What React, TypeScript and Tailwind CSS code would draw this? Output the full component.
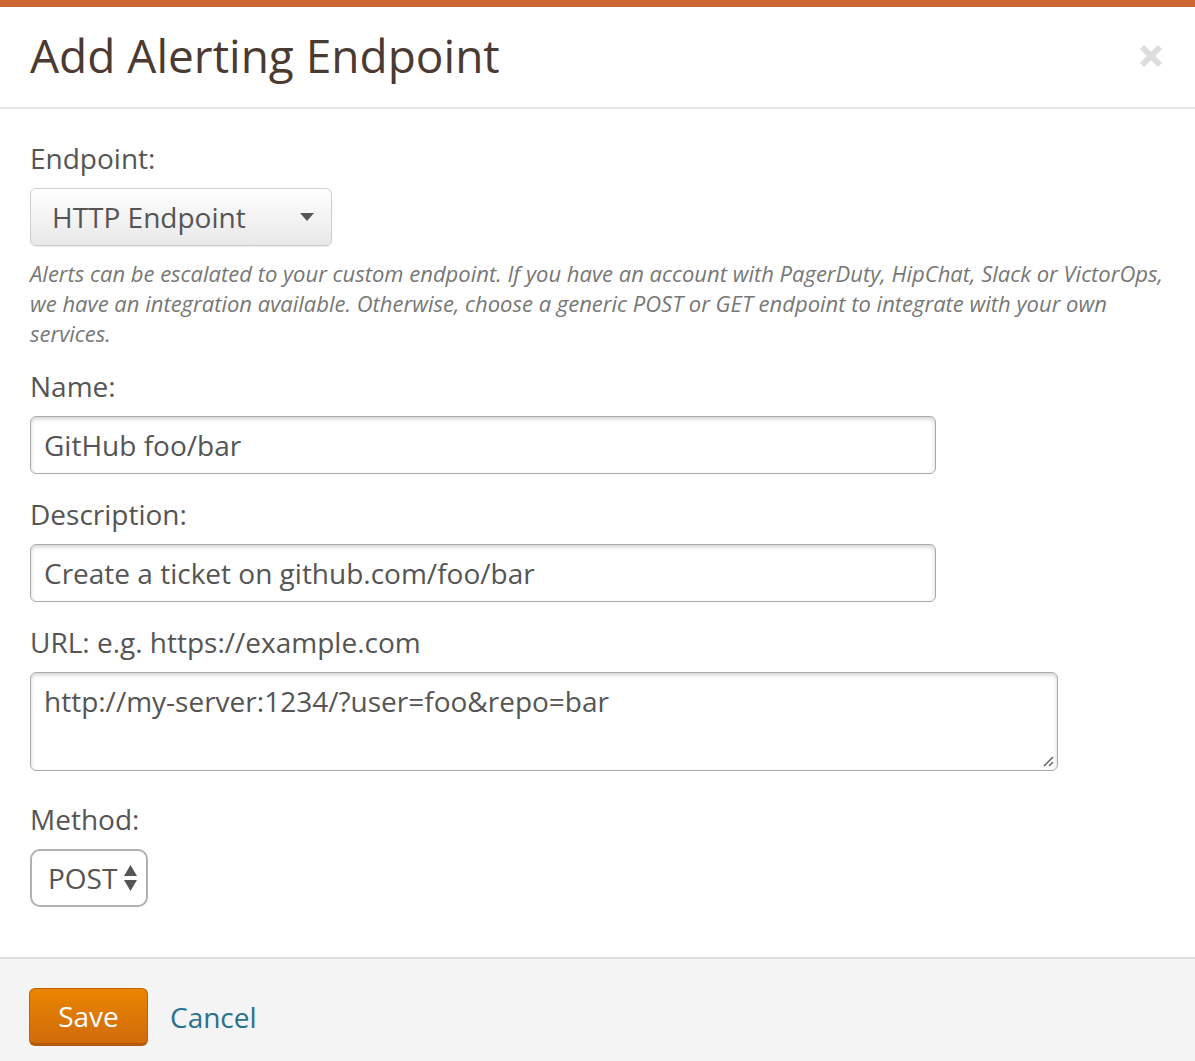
import React from 'react';

const font = { fontFamily: '"Open Sans", "Liberation Sans", sans-serif' };

function Label({ children }: { children: React.ReactNode }) {
  return <div className="text-[28px] leading-[40px] text-[#555] mb-[10px]">{children}</div>;
}

export default function App() {
  return (
    <div className="w-[1195px] h-[1061px] bg-white flex flex-col overflow-hidden" style={font}>
      {/* top accent */}
      <div className="h-[7px] bg-[#cc6633] shrink-0" />

      {/* Header */}
      <header className="flex justify-between items-start pl-[30px] pr-[32px] pt-[23px] h-[102px] border-b-2 border-[#e8e8e8] shrink-0">
        <h1 className="text-[46px] leading-[51px] text-[#4b3a32] font-normal">Add Alerting Endpoint</h1>
        <svg width="24" height="24" viewBox="0 0 24 24" className="mt-[14px]">
          <path d="M3 3 L21 21 M21 3 L3 21" stroke="#dddddd" strokeWidth="6" strokeLinecap="butt" />
        </svg>
      </header>

      {/* Body */}
      <main className="flex-1 pl-[30px] pt-[29px]">
        <Label>Endpoint:</Label>
        <div className="w-[302px] h-[58px] flex items-center justify-between pl-[21px] pr-[17px] rounded-[6px] border border-[#cfcfcf] bg-gradient-to-b from-[#ffffff] to-[#e8e8e8] shadow-[0_1px_1px_rgba(0,0,0,0.08)]">
          <span className="text-[28px] leading-[40px] text-[#555]">HTTP Endpoint</span>
          <svg width="14" height="8" viewBox="0 0 14 8">
            <path d="M0 0 H14 L7 8 Z" fill="#555" />
          </svg>
        </div>
        <p className="mt-[12px] w-[1142px] text-[22px] leading-[30px] italic text-[#777]">
          Alerts can be escalated to your custom endpoint. If you have an account with PagerDuty, HipChat, Slack or VictorOps, we have an integration available. Otherwise, choose a generic POST or GET endpoint to integrate with your own services.
        </p>

        <div className="mt-[18px]">
          <Label>Name:</Label>
          <div className="w-[906px] h-[58px] flex items-center px-[13px] rounded-[6px] border border-[#aaa] shadow-[inset_0_2px_4px_rgba(0,0,0,0.18)] text-[28px] leading-[40px] text-[#555]">
            GitHub foo/bar
          </div>
        </div>

        <div className="mt-[20px]">
          <Label>Description:</Label>
          <div className="w-[906px] h-[58px] flex items-center px-[13px] rounded-[6px] border border-[#aaa] shadow-[inset_0_2px_4px_rgba(0,0,0,0.18)] text-[28px] leading-[40px] text-[#555]">
            Create a ticket on github.com/foo/bar
          </div>
        </div>

        <div className="mt-[20px]">
          <Label>URL: e.g. https://example.com</Label>
          <div className="relative w-[1028px] h-[99px] px-[13px] pt-[8px] rounded-[6px] border border-[#aaa] shadow-[inset_0_2px_4px_rgba(0,0,0,0.18)] text-[28px] leading-[40px] text-[#555]">
            http://my-server:1234/?user=foo&amp;repo=bar
            <svg width="12" height="12" viewBox="0 0 12 12" className="absolute right-[3px] bottom-[3px]">
              <path d="M11 2 L2 11 M11 7 L7 11" stroke="#666" strokeWidth="1.5" />
            </svg>
          </div>
        </div>

        <div className="mt-[28px]">
          <Label>Method:</Label>
          <div className="w-[118px] h-[58px] flex items-center justify-between pl-[16px] pr-[9px] rounded-[10px] border-2 border-[#b0b0b0] bg-white">
            <span className="text-[28px] leading-[40px] text-[#555]">POST</span>
            <svg width="13" height="26" viewBox="0 0 13 26">
              <path d="M6.5 0 L13 11 H0 Z" fill="#555" />
              <path d="M0 15 H13 L6.5 26 Z" fill="#555" />
            </svg>
          </div>
        </div>
      </main>

      {/* Footer */}
      <footer className="shrink-0 h-[104px] border-t-2 border-[#dddddd] bg-[#f4f4f4] flex items-start pt-[29px] pl-[29px] gap-[22px]">
        <button className="w-[119px] h-[58px] rounded-[6px] border border-[#c0600a] border-b-[3px] border-b-[#b4590c] bg-gradient-to-b from-[#ea8500] to-[#d06b0a] text-white text-[28px] leading-[40px]">
          Save
        </button>
        <span className="text-[28px] leading-[58px] text-[#28728f]">Cancel</span>
      </footer>
    </div>
  );
}
